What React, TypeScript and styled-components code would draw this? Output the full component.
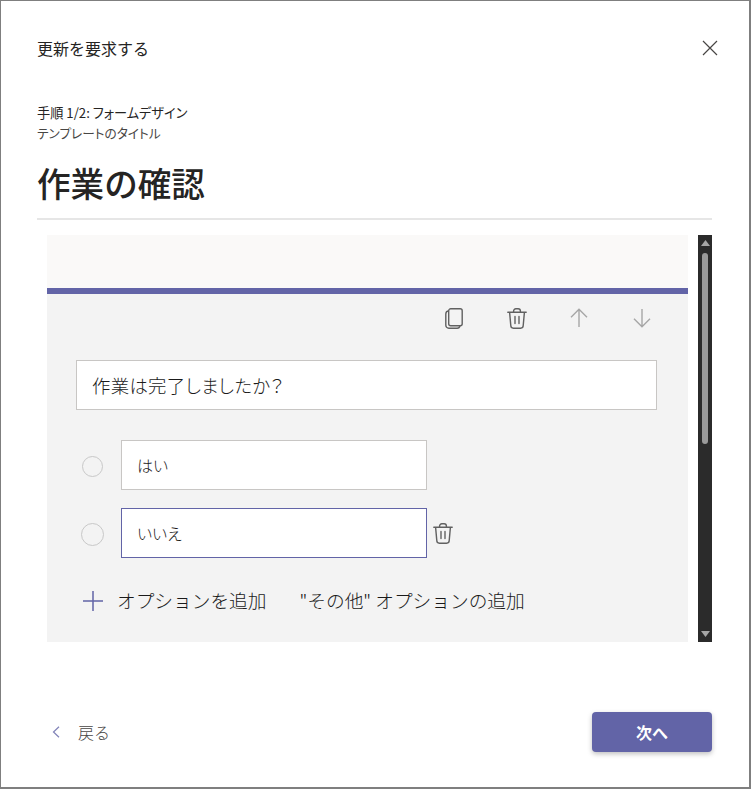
import React from 'react'
import styled, { createGlobalStyle } from 'styled-components'

const GlobalStyle = createGlobalStyle`
  html, body {
    margin: 0;
    padding: 0;
    background: #fff;
  }
  * {
    box-sizing: border-box;
  }
`

const Dialog = styled.div`
  width: 751px;
  height: 789px;
  display: flex;
  flex-direction: column;
  background: #fff;
  border-style: solid;
  border-color: #7f7f7f;
  border-width: 1px 2px 2px 1px;
  padding: 0 37px 0 36px;
  font-family: 'Noto Sans CJK JP', 'Noto Sans', sans-serif;
  color: #252423;
`

const Header = styled.div`
  height: 96px;
  display: flex;
  align-items: center;
  justify-content: space-between;
`

const DialogTitle = styled.div`
  font-size: 16px;
  font-weight: 400;
  line-height: 24px;
  margin-top: -3px;
`

const CloseButton = styled.button`
  width: 16px;
  height: 16px;
  margin: -3px -6px 0 0;
  padding: 0;
  border: 0;
  background: none;
  color: #484644;
  display: flex;
`

const Step = styled.div`
  font-size: 13.2px;
  line-height: 20px;
  margin-top: 6px;
  font-weight: 400;
  font-feature-settings: 'palt';
`

const TemplateLabel = styled.div`
  font-size: 12.7px;
  line-height: 20px;
  color: #484644;
  font-feature-settings: 'palt';
`

const Heading = styled.h1`
  margin: 16px 0 0;
  font-size: 33.6px;
  line-height: 48px;
  font-weight: 500;
  padding-bottom: 11px;
  border-bottom: 2px solid #e6e6e6;
`

const FormArea = styled.div`
  display: flex;
  margin: 15px 0 0 10px;
  height: 407px;
  gap: 10px;
`

const FormCard = styled.div`
  flex: 1;
  display: flex;
  flex-direction: column;
  background: #f3f3f3;
`

const Banner = styled.div`
  height: 59px;
  background: #faf9f8;
  border-bottom: 6px solid #6264a7;
`

const Toolbar = styled.div`
  height: 47px;
  display: flex;
  justify-content: flex-end;
  align-items: center;
  padding: 1px 15px 0 0;
`

const ToolButton = styled.span<{ $muted?: boolean }>`
  width: 62.5px;
  display: flex;
  justify-content: center;
  color: ${(props) => (props.$muted ? '#a6a6a6' : '#616161')};
`

const Question = styled.div`
  height: 50px;
  margin: 19px 31px 0 29px;
  display: flex;
  align-items: center;
  padding: 0 15px;
  background: #fff;
  border: 1px solid #c8c6c4;
  color: #1a1a1a;
  font-size: 18.4px;
  font-weight: 300;
  letter-spacing: 0.3px;
  font-feature-settings: 'palt';
`

const Options = styled.div`
  margin: 30px 0 0 34px;
  display: flex;
  flex-direction: column;
  gap: 18px;
`

const OptionRow = styled.div`
  display: flex;
  align-items: center;
  height: 50px;
`

const RadioSlot = styled.div`
  width: 40px;
  display: flex;
  padding-top: 2px;
`

const Radio = styled.span<{ $large?: boolean }>`
  display: block;
  width: ${(props) => (props.$large ? 23 : 21)}px;
  height: ${(props) => (props.$large ? 23 : 21)}px;
  margin-left: ${(props) => (props.$large ? 0 : 1)}px;
  border-radius: 50%;
  border: 1.5px solid #c8c8c8;
`

const OptionInput = styled.div<{ $active?: boolean }>`
  width: 306px;
  height: 50px;
  display: flex;
  align-items: center;
  padding: 0 15px;
  background: #fff;
  border: 1px solid ${(props) => (props.$active ? '#6264a7' : '#c8c6c4')};
  color: #1a1a1a;
  font-size: 16px;
  font-weight: 300;
  font-feature-settings: 'palt';
`

const RowTrash = styled.span`
  display: flex;
  margin-left: 6px;
  color: #616161;
`

const AddRow = styled.div`
  margin: 16px 0 0 36px;
  display: flex;
  align-items: center;
  height: 50px;
  color: #1a1a1a;
  font-size: 18.7px;
  font-weight: 300;
`

const PlusIcon = styled.span`
  display: flex;
  width: 34px;
  padding-top: 4px;
  color: #6264a7;
`

const AddOther = styled.span`
  margin-left: 33px;
`

const Scrollbar = styled.div`
  width: 14px;
  display: flex;
  flex-direction: column;
  align-items: center;
  background: #2b2b2b;
  padding: 5px 0 5px;
`

const Thumb = styled.div`
  width: 6px;
  height: 191px;
  margin-top: 7px;
  border-radius: 3px;
  background: #9a9a9a;
`

const ScrollArrow = styled.svg<{ $end?: boolean }>`
  width: 9px;
  height: 6px;
  margin-top: ${(props) => (props.$end ? 'auto' : '0')};
  display: block;
  fill: #a6a6a6;
`

const Footer = styled.div`
  flex: 1;
  display: flex;
  align-items: center;
  justify-content: space-between;
  padding-top: 35px;
`

const BackButton = styled.div`
  display: flex;
  align-items: center;
  margin-left: 15px;
  gap: 18px;
  font-size: 16px;
  font-weight: 300;
  color: #484644;
`

const BackChevron = styled.span`
  display: flex;
  color: #6264a7;
  opacity: 0.8;
`

const NextButton = styled.button`
  width: 120px;
  height: 40px;
  border: 0;
  border-radius: 4px;
  background: #6264a7;
  color: #fff;
  font-family: inherit;
  font-size: 16px;
  font-weight: 700;
  box-shadow: 0 2px 5px rgba(0, 0, 0, 0.25);
`

const TrashIcon: React.FC<{ width: number; height: number }> = ({ width, height }) => (
  <svg width={width} height={height} viewBox="0 0 20 21" fill="none" stroke="currentColor" strokeWidth="1.4">
    <path d="M0.8 4.2h18.4" strokeLinecap="round" />
    <path d="M6.6 4V3a2.2 2.2 0 0 1 2.2-2.2h2.4A2.2 2.2 0 0 1 13.4 3v1" />
    <path d="M2.6 4.4l1.2 13.2a2.6 2.6 0 0 0 2.6 2.6h7.2a2.6 2.6 0 0 0 2.6-2.6l1.2-13.2" />
    <path d="M8 8.5v7M12 8.5v7" strokeLinecap="round" />
  </svg>
)

const CopyIcon = () => (
  <svg width="18" height="21" viewBox="0 0 18 21" fill="none" stroke="currentColor" strokeWidth="1.4">
    <rect x="3.7" y="0.8" width="13.5" height="17" rx="2" />
    <path d="M3.7 3A3 3 0 0 0 0.8 6v11.2a3 3 0 0 0 3 3h8.4a2.8 2.8 0 0 0 2.7-2.4" />
  </svg>
)

const ArrowUpIcon = () => (
  <svg width="18" height="20" viewBox="0 0 18 20" fill="none" stroke="currentColor" strokeWidth="1.4">
    <path d="M9 19V1.2M1 9.2l8-8 8 8" />
  </svg>
)

const ArrowDownIcon = () => (
  <svg width="18" height="20" viewBox="0 0 18 20" fill="none" stroke="currentColor" strokeWidth="1.4">
    <path d="M9 1v17.8M1 10.8l8 8 8-8" />
  </svg>
)

const App = () => (
  <Dialog>
    <GlobalStyle />
    <Header>
      <DialogTitle>更新を要求する</DialogTitle>
      <CloseButton aria-label="閉じる">
        <svg width="16" height="16" viewBox="0 0 16 16" fill="none" stroke="currentColor" strokeWidth="1.2">
          <path d="M1 1l14 14M15 1L1 15" />
        </svg>
      </CloseButton>
    </Header>
    <Step>手順 1/2: フォームデザイン</Step>
    <TemplateLabel>テンプレートのタイトル</TemplateLabel>
    <Heading>作業の確認</Heading>
    <FormArea>
      <FormCard>
        <Banner />
        <Toolbar>
          <ToolButton><CopyIcon /></ToolButton>
          <ToolButton><TrashIcon width={20} height={21} /></ToolButton>
          <ToolButton $muted><ArrowUpIcon /></ToolButton>
          <ToolButton $muted><ArrowDownIcon /></ToolButton>
        </Toolbar>
        <Question>作業は完了しましたか？</Question>
        <Options>
          <OptionRow>
            <RadioSlot><Radio /></RadioSlot>
            <OptionInput>はい</OptionInput>
          </OptionRow>
          <OptionRow>
            <RadioSlot><Radio $large /></RadioSlot>
            <OptionInput $active>いいえ</OptionInput>
            <RowTrash><TrashIcon width={20} height={21} /></RowTrash>
          </OptionRow>
        </Options>
        <AddRow>
          <PlusIcon>
            <svg width="20" height="20" viewBox="0 0 20 20" fill="none" stroke="currentColor" strokeWidth="1.5">
              <path d="M10 0v20M0 10h20" />
            </svg>
          </PlusIcon>
          <span>オプションを追加</span>
          <AddOther>"その他" オプションの追加</AddOther>
        </AddRow>
      </FormCard>
      <Scrollbar>
        <ScrollArrow viewBox="0 0 9 6"><path d="M4.5 0L9 6H0z" /></ScrollArrow>
        <Thumb />
        <ScrollArrow $end viewBox="0 0 9 6"><path d="M0 0h9L4.5 6z" /></ScrollArrow>
      </Scrollbar>
    </FormArea>
    <Footer>
      <BackButton>
        <BackChevron>
          <svg width="8" height="12" viewBox="0 0 8 12" fill="none" stroke="currentColor" strokeWidth="1.2">
            <path d="M7 0.8L1.5 6L7 11.2" />
          </svg>
        </BackChevron>
        戻る
      </BackButton>
      <NextButton>次へ</NextButton>
    </Footer>
  </Dialog>
)

export default App
